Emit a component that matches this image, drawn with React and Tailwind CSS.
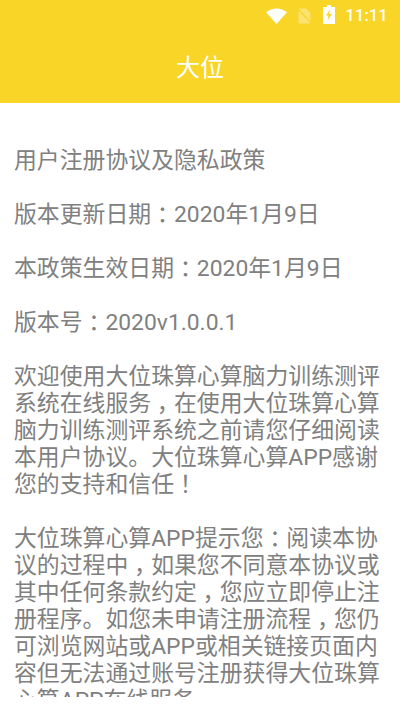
const paragraphs = [
  ["用户注册协议及隐私政策"],
  ["版本更新日期：2020年1月9日"],
  ["本政策生效日期：2020年1月9日"],
  ["版本号：2020v1.0.0.1"],
  ["欢迎使用大位珠算心算脑力训练测评", "系统在线服务，在使用大位珠算心算", "脑力训练测评系统之前请您仔细阅读", "本用户协议。大位珠算心算APP感谢", "您的支持和信任！"],
  ["大位珠算心算APP提示您：阅读本协", "议的过程中，如果您不同意本协议或", "其中任何条款约定，您应立即停止注", "册程序。如您未申请注册流程，您仍", "可浏览网站或APP或相关链接页面内", "容但无法通过账号注册获得大位珠算", "心算APP在线服务"],
];

const font = { fontFamily: '"Roboto","Noto Sans CJK SC",sans-serif' };

function Line({ text }) {
  return (
    <div className="whitespace-nowrap">
      {text.split(/([，：！])/).map((part, i) =>
        i % 2 === 1 ? (
          <span key={i} className="px-[0.25em] [font-feature-settings:'halt']">{part}</span>
        ) : (
          <span key={i}>{part}</span>
        )
      )}
    </div>
  );
}

export default function App() {
  return (
    <div className="w-[400px] h-[711px] bg-white overflow-hidden flex flex-col" style={font}>
      <header className="bg-[#f8d527] h-[103px] shrink-0 flex flex-col">
        <div className="h-[32px] flex items-center justify-end pr-[12px] text-white">
          <svg className="mr-[10px]" width="21" height="16" viewBox="0 0 21 16"><path d="M0 4.2C3 1.8 6.6 0.4 10.5 0.4S18 1.8 21 4.2L10.5 16Z" fill="#fff" /></svg>
          <svg className="mr-[11px]" width="15" height="16" viewBox="0 0 15 16"><path d="M1.5 0.5h7.5l4.5 4.5v10.5h-12Z" fill="#fff" fillOpacity=".35" /><path d="M0.5 0.5l14 15" stroke="#f8d527" strokeWidth="1.4" /></svg>
          <svg className="mr-[10px] mb-[4px]" width="12" height="19" viewBox="0 0 12 19"><path fillRule="evenodd" d="M4 0h4v2h4v17H0V2h4ZM7 4.5 3 10.5h2.5L4.5 15.5 9 9H6.2Z" fill="#fff" /></svg>
          <span className="text-[16px] font-medium leading-none tracking-[0.4px]">11:11</span>
        </div>
        <div className="flex-1 flex items-center justify-center text-white text-[24px] leading-none">大位</div>
      </header>
      <main className="h-[594px] shrink-0 overflow-hidden px-[14px] pt-[44px] text-[#808080] text-[22.86px] leading-[27px]">
        {paragraphs.map((lines, i) => (
          <div key={i} className="mb-[27px]">
            {lines.map((l, j) => (
              <Line key={j} text={l} />
            ))}
          </div>
        ))}
      </main>
    </div>
  );
}
